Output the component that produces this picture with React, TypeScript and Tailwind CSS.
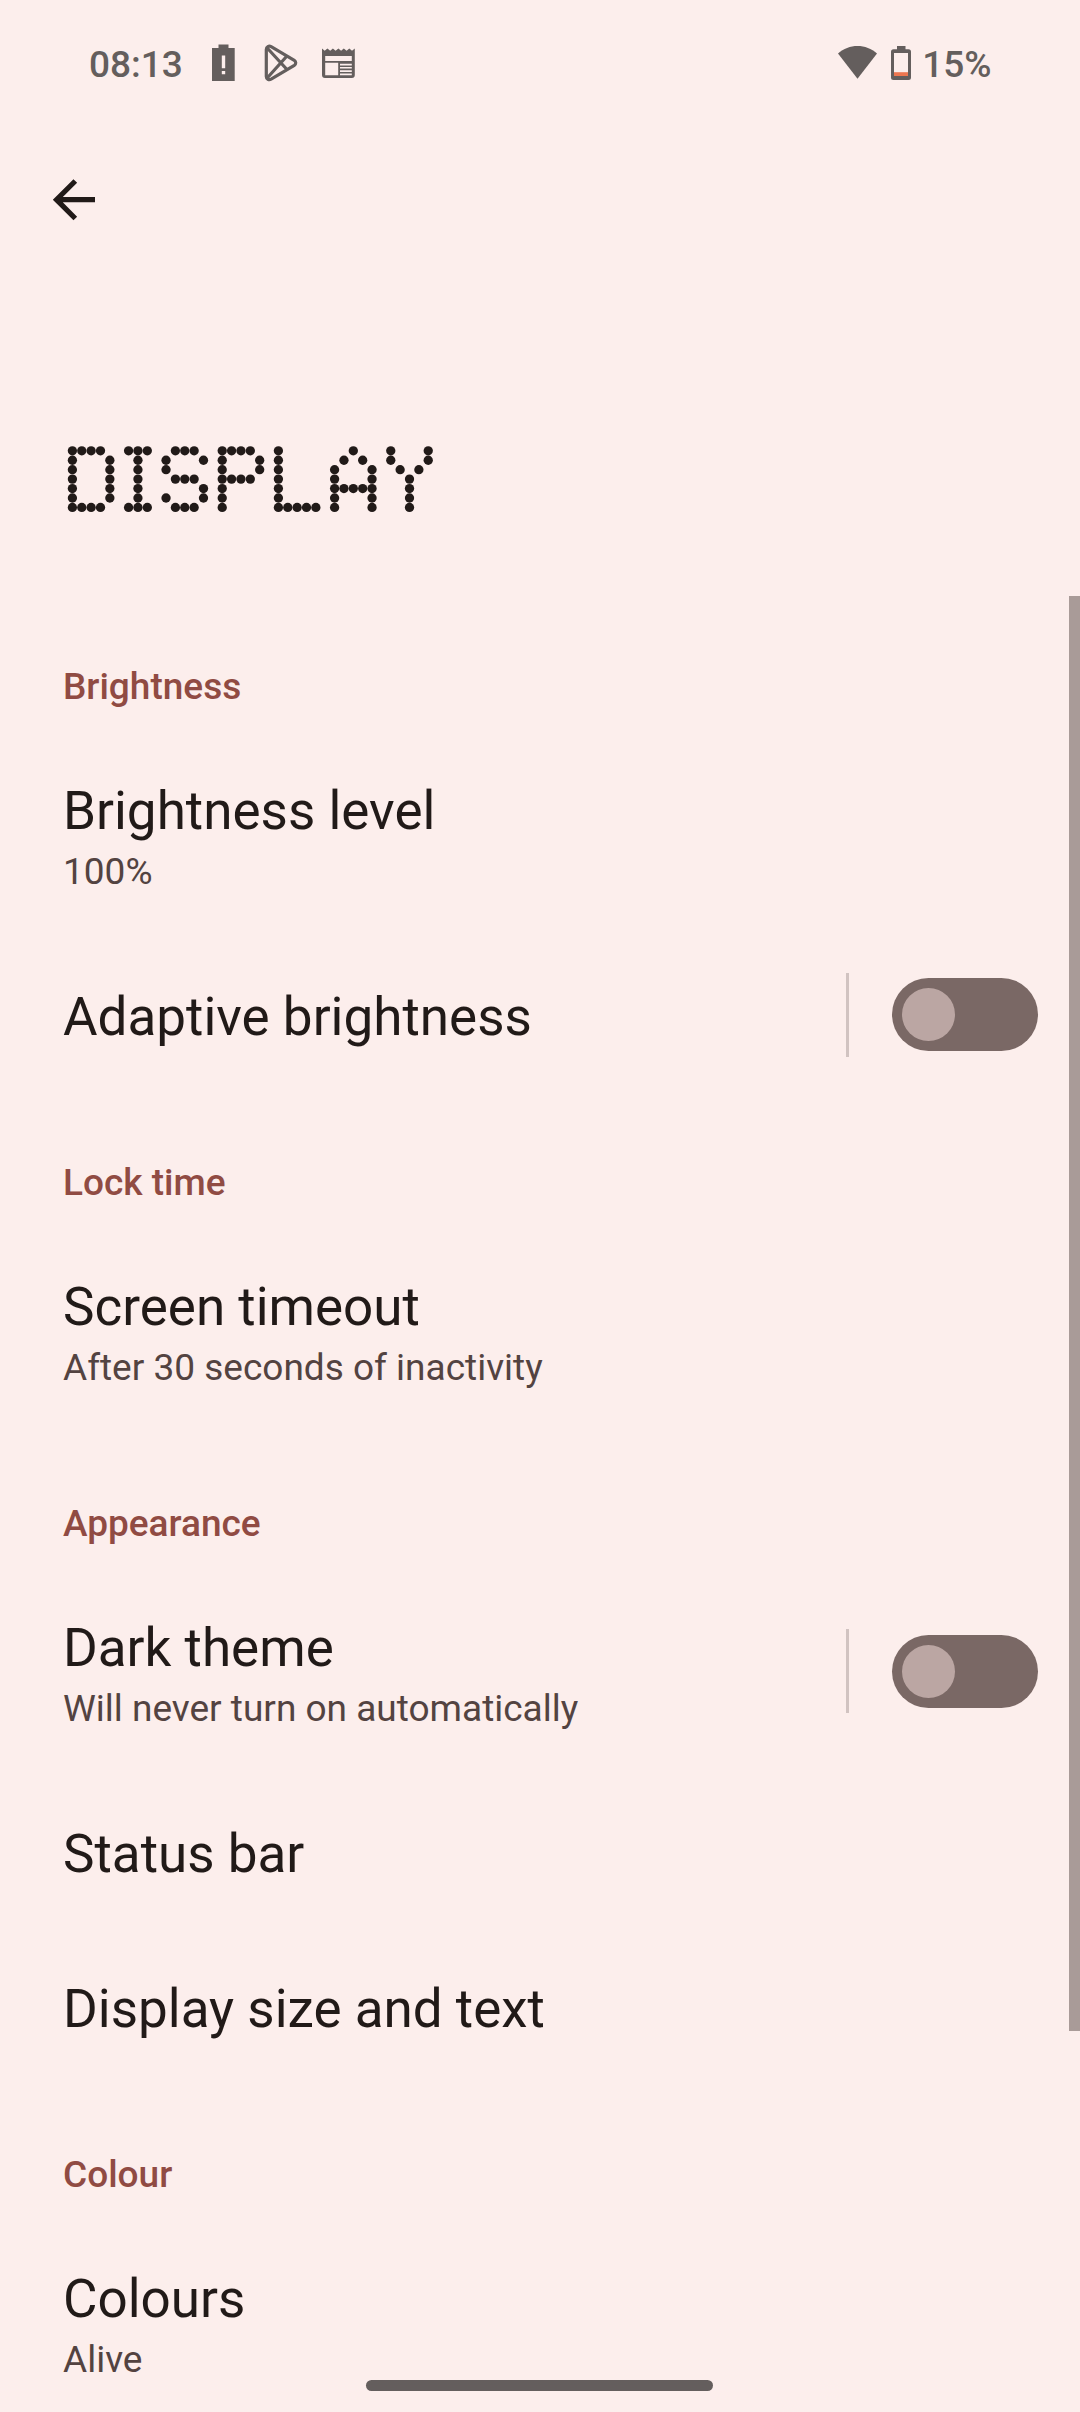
import type { ReactNode } from "react";

interface SettingRowProps {
  title: string;
  summary?: string;
  action?: ReactNode;
}

// 7-row bitmaps for the dot matrix heading
const GLYPHS: Record<string, string[]> = {
  D: ["####.", "#...#", "#...#", "#...#", "#...#", "#...#", "####."],
  I: ["###", ".#.", ".#.", ".#.", ".#.", ".#.", "###"],
  S: [".###.", "#...#", "#....", ".###.", "....#", "#...#", ".###."],
  P: ["####.", "#...#", "#...#", "####.", "#....", "#....", "#...."],
  L: ["#....", "#....", "#....", "#....", "#....", "#....", "#####"],
  A: ["..#..", ".#.#.", "#...#", "#...#", "#####", "#...#", "#...#"],
  Y: ["#...#", "#...#", ".#.#.", "..#..", "..#..", "..#..", "..#.."],
};

const DotHeading = ({ text }: { text: string }) => {
  const dots: { x: number; y: number }[] = [];
  let col = 0;

  text.split("").forEach((char) => {
    const rows = GLYPHS[char];
    rows.forEach((row, r) => {
      row.split("").forEach((cell, c) => {
        if (cell === "#") dots.push({ x: 5.4 + (col + c) * 9.364, y: 4.8 + r * 9.44 });
      });
    });
    col += rows[0].length + 1;
  });

  return (
    <h1 aria-label={text}>
      <svg width="366" height="67" viewBox="0 0 366 67" fill="#211a18" aria-hidden="true">
        {dots.map((dot) => (
          <circle key={`${dot.x}-${dot.y}`} cx={dot.x} cy={dot.y} r="4.65" />
        ))}
      </svg>
    </h1>
  );
};

const StatusBar = () => (
  <div className="flex h-[126px] items-start justify-between pt-[43px] pr-[88.5px] pl-[89px] text-[37px] leading-[43px] font-medium text-[#645e5d]">
    <div className="flex">
      <span className="w-[123px]">08:13</span>
      <svg width="23" height="37" viewBox="0 0 23 37" className="mt-px" fill="currentColor">
        <path
          fillRule="evenodd"
          d="M6.5 0.5h10v3.5H22.7V37H0V4H6.5ZM9.8 11.5v12.7h3.4V11.5ZM9.8 27v3.3h3.4V27Z"
        />
      </svg>
      <svg
        width="34"
        height="38"
        viewBox="0 0 34 38"
        className="mt-px ml-[29px]"
        fill="none"
        stroke="currentColor"
        strokeWidth="3.2"
        strokeLinejoin="round"
      >
        <path d="M2.3 5.4v27c0 2.7 2.6 4 4.8 2.800L30.300 21.400c1.900-1.200 1.900-3.900 0-5.100L7.100 2.600C4.900 1.400 2.300 2.700 2.300 5.400Z" />
        <path d="M3.200 4 22.500 25M3.200 34 22.500 12.500" />
        <circle cx="16.500" cy="18.900" r="1.500" fill="currentColor" stroke="none" />
      </svg>
      <svg width="33" height="31" viewBox="0 0 33 31" className="mt-[5px] ml-[24px]" fill="currentColor">
        <path
          fillRule="evenodd"
          d="M0 .5 2.700 2.800 5.400.5 8.200 2.800 10.900.5 13.600 2.800 16.400.5 19.100 2.800 21.800.5 24.600 2.800 27.300.5 30 2.800 32.800.5V27a3 3 0 0 1-3 3H3a3 3 0 0 1-3-3ZM3.200 8v5h26.600V8ZM3.200 14.800v12.400h13V14.800ZM18 15.800v1.600h11.800v-1.600ZM18 19v1.600h11.800V19ZM18 22.300v1.600h11.800v-1.600ZM18 25.600v1.600h11.800v-1.600Z"
        />
      </svg>
    </div>
    <div className="flex">
      <svg width="39" height="33" viewBox="0 0 39 33" className="mt-[3px]" fill="currentColor">
        <path d="M0 7.5C5.5 2.6 12.3 0 19.5 0S33.5 2.6 39 7.5L19.5 32.7Z" />
      </svg>
      <svg width="20" height="34" viewBox="0 0 20 34" className="mt-[3px] ml-[14px]" fill="currentColor">
        <path
          fillRule="evenodd"
          d="M6 0h8.500v3.300h3A2.500 2.500 0 0 1 20 5.800v25.700a2.500 2.500 0 0 1-2.500 2.500h-15A2.500 2.500 0 0 1 0 31.500V5.800a2.500 2.500 0 0 1 2.500-2.500H6ZM3 7v23h14V7Z"
        />
        <path d="M3 26.200h14V30H3Z" fill="#ee7650" />
      </svg>
      <span className="ml-[11.5px]">15%</span>
    </div>
  </div>
);

const Toggle = () => (
  <div className="-mt-[6px] flex items-center gap-[43px]">
    <span className="h-[84px] w-[3px] bg-[#d1c3c1]" />
    <button role="switch" aria-checked="false" className="h-[73px] w-[146px] rounded-full bg-[#7a6865] p-[10px]">
      <span className="block size-[53px] rounded-full bg-[#bba6a3]" />
    </button>
  </div>
);

const SectionTitle = ({ children }: { children: ReactNode }) => (
  <h2 className="h-[135px] pt-[66px] text-[37px] leading-[43px] font-medium text-[#904b43]">{children}</h2>
);

const SettingRow = ({ title, summary, action }: SettingRowProps) => (
  <div className="flex items-center justify-between">
    <div className="pt-[46px] pb-[47px]">
      <p className="text-[53px] leading-[62px] text-[#211a18]">{title}</p>
      {summary && <p className="mt-[8px] h-[43px] text-[37px] leading-[43px] text-[#534341]">{summary}</p>}
    </div>
    {action}
  </div>
);

const App = () => {
  return (
    <div className="relative h-[2412px] w-[1080px] overflow-hidden bg-[#fceeec] font-[Roboto,sans-serif]">
      <StatusBar />

      <header className="h-[473px] pt-[53px]">
        <button className="ml-[52px] block" aria-label="Back">
          <svg width="44" height="42" viewBox="0 0 44 42" fill="none" stroke="#211a18" strokeWidth="5.2">
            <path d="M43 20.7H5M23.3 2 4.5 20.7 23.3 39.5" />
          </svg>
        </button>
        <div className="mt-[225px] ml-[67px]">
          <DotHeading text="DISPLAY" />
        </div>
      </header>

      <main className="pr-[42px] pl-[63px]">
        <SectionTitle>Brightness</SectionTitle>
        <SettingRow title="Brightness level" summary="100%" />
        <SettingRow title="Adaptive brightness" action={<Toggle />} />

        <SectionTitle>Lock time</SectionTitle>
        <SettingRow title="Screen timeout" summary="After 30 seconds of inactivity" />

        <SectionTitle>Appearance</SectionTitle>
        <SettingRow title="Dark theme" summary="Will never turn on automatically" action={<Toggle />} />
        <SettingRow title="Status bar" />
        <SettingRow title="Display size and text" />

        <SectionTitle>Colour</SectionTitle>
        <SettingRow title="Colours" summary="Alive" />
      </main>

      {/* scroll thumb and gesture bar float over the list */}
      <div className="absolute top-[596px] right-0 h-[1435px] w-[11px] bg-[#a99b98]" />
      <div className="absolute top-[2380px] left-[366px] h-[11px] w-[347px] rounded-full bg-[#645e5d]" />
    </div>
  );
};

export default App;
